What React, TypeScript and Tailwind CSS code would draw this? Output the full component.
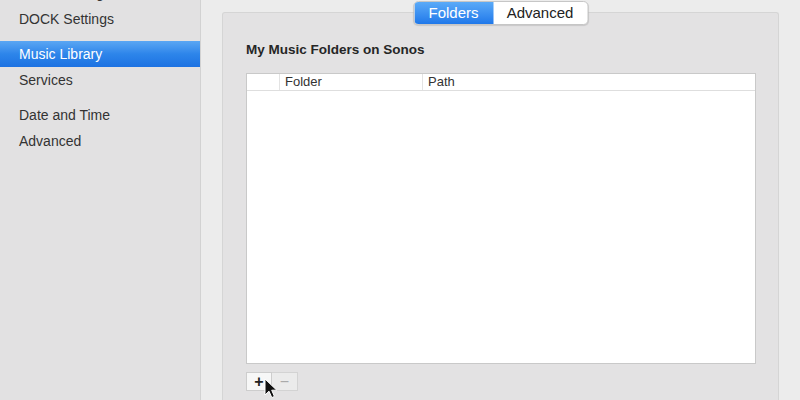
import React from 'react';

type NavItem = { label: string; selected?: boolean };

const groups: NavItem[][] = [
  [{ label: 'Room Settings' }, { label: 'DOCK Settings' }],
  [{ label: 'Music Library', selected: true }, { label: 'Services' }],
  [{ label: 'Date and Time' }, { label: 'Advanced' }],
];

function Sidebar() {
  return (
    <div className="w-[201px] shrink-0 h-full bg-[#e2e1e2] border-r border-[#d2d2d2] overflow-hidden">
      <div className="mt-[-20px] flex flex-col gap-[9px]">
        {groups.map((group, gi) => (
          <div key={gi} className="flex flex-col">
            {group.map((item) => (
              <div
                key={item.label}
                className={
                  item.selected
                    ? 'h-[26px] flex items-center pl-[19px] text-[14px] text-white bg-gradient-to-b from-[#5aa6f3] via-[#2d85ea] to-[#1d72e2]'
                    : 'h-[26px] flex items-center pl-[19px] text-[14px] text-[#333]'
                }
              >
                {item.label}
              </div>
            ))}
          </div>
        ))}
      </div>
    </div>
  );
}

function SegmentedControl() {
  return (
    <div className="absolute left-1/2 -translate-x-1/2 top-[-12px] flex h-[24px] rounded-[5px] border border-[#c6c6c6] bg-white shadow-[0_1px_1px_rgba(0,0,0,0.12)] overflow-hidden">
      <div className="w-[79px] flex items-center justify-center text-[15px] text-white bg-gradient-to-b from-[#5aaaf8] to-[#1f78ea]">
        Folders
      </div>
      <div className="w-[94px] flex items-center justify-center text-[15px] text-[#222]">
        Advanced
      </div>
    </div>
  );
}

function FolderTable() {
  return (
    <div className="h-[291px] bg-white border border-[#c9c9c9] flex flex-col">
      <div className="h-[17px] flex items-stretch border-b border-[#dedede] text-[13px] text-[#333]">
        <div className="w-[32px]" />
        <div className="w-[143px] flex items-center pl-[5px] border-l border-[#e3e3e3]">Folder</div>
        <div className="flex-1 flex items-center pl-[5px] border-l border-[#e3e3e3]">Path</div>
      </div>
      <div className="flex-1" />
    </div>
  );
}

function Cursor() {
  return (
    <svg className="absolute left-[264px] top-[378px]" width="14" height="22" viewBox="0 0 14 22">
      <path
        d="M1 1 L1 17 L5 13.2 L7.8 19.6 L10.4 18.4 L7.7 12.2 L12.8 12.2 Z"
        fill="#111"
        stroke="#fff"
        strokeWidth="1"
        strokeLinejoin="round"
      />
    </svg>
  );
}

export default function App() {
  return (
    <div
      className="relative w-[800px] h-[400px] flex overflow-hidden bg-[#ececec]"
      style={{ fontFamily: '"Liberation Sans", Arial, sans-serif' }}
    >
      <Sidebar />
      <div className="flex-1 pt-[12px] pl-[21px] pr-[21px]">
        <div className="relative h-[420px] bg-[#e3e2e3] border-t border-x border-[#d5d5d5] rounded-t-[3px] pl-[23px] pr-[22px] pt-[29px]">
          <SegmentedControl />
          <div className="text-[13.5px] font-bold text-[#262626] leading-[16px]">My Music Folders on Sonos</div>
          <div className="mt-[15px]">
            <FolderTable />
          </div>
          <div className="mt-[8px] flex">
            <div className="w-[26px] h-[19px] flex items-center justify-center bg-[#f7f7f7] border border-[#cdcdcd] text-[16px] font-bold text-[#222] leading-none">
              +
            </div>
            <div className="w-[26px] h-[19px] flex items-center justify-center bg-[#ebebeb] border border-l-0 border-[#d3d3d3] text-[16px] text-[#aaa] leading-none">
              −
            </div>
          </div>
        </div>
      </div>
      <Cursor />
    </div>
  );
}
